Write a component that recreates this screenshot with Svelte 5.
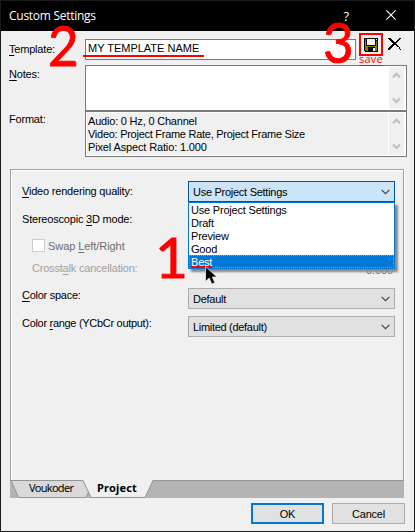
<script>
  const options = ['Use Project Settings', 'Draft', 'Preview', 'Good', 'Best'];
  let selected = $state('Best');
</script>

{#snippet chevron(up)}
  <svg class="scroll-arrow" width="9" height="7" viewBox="0 0 9 7">
    <path d={up ? 'M1 5.2 4.5 1.7 8 5.2' : 'M1 1.5 4.5 5 8 1.5'} fill="none" stroke="#bfbfbf" stroke-width="2.1" />
  </svg>
{/snippet}

{#snippet arrow()}
  <svg class="combo-arrow" width="9" height="6" viewBox="0 0 9 6">
    <path d="M.6 .8 4.5 4.7 8.4 .8" fill="none" stroke="#444" stroke-width="1.2" />
  </svg>
{/snippet}

{#snippet scrollbar()}
  <div class="scrollbar">{@render chevron(true)}{@render chevron(false)}</div>
{/snippet}

<div class="window">
  <header>
    <span class="title">Custom Settings</span>
    <span class="help">?</span>
    <svg class="close" width="10" height="10" viewBox="0 0 10 10">
      <path d="M.4 .4 9.6 9.6M9.6 .4 .4 9.6" stroke="#fff" stroke-width="1.1" />
    </svg>
  </header>

  <section class="form">
    <div class="row template">
      <span class="label"><u>T</u>emplate:</span>
      <div class="input"><span class="name">MY TEMPLATE NAME</span></div>
      <div class="save">
        <svg width="14" height="14" viewBox="0 0 14 14" shape-rendering="crispEdges">
          <path d="M0 0H14V14H1L0 13Z" fill="#000" />
          <path d="M1 1H2V8H12V3H13V13H11V9H4V13H2L1 12Z" fill="#808000" />
          <path d="M3 1H11V7H3Z" fill="#f0f0f0" />
          <path d="M12 1H13V2H12Z" fill="#f0f0f0" />
          <path d="M9 10H11V13H9Z" fill="#f0f0f0" />
        </svg>
      </div>
      <svg class="delete" width="14" height="13" viewBox="0 0 14 13" shape-rendering="crispEdges">
        <path d="M0 0H3V1H4V2H5V3H6V4H8V3H9V2H10V1H11V0H13V1H12V2H11V3H10V4H9V5H8V6H9V7H10V8H11V9H12V10H11V9H9V8H8V7H6V8H5V9H4V10H3V11H2V12H0V10H1V9H2V8H3V7H4V6H5V5H4V4H3V3H2V2H1V1H0ZM11 10H12V11H11ZM12 11H13V12H12Z" fill="#000" />
      </svg>
    </div>
    <div class="row notes">
      <span class="label"><u>N</u>otes:</span>
      <div class="box white">{@render scrollbar()}</div>
    </div>
    <div class="row format">
      <span class="label">Format:</span>
      <div class="box">
        <div class="lines">
          <div>Audio: 0 Hz, 0 Channel</div>
          <div class="tight">Video: Project Frame Rate, Project Frame Size</div>
          <div class="loose">Pixel Aspect Ratio: 1.000</div>
        </div>
        {@render scrollbar()}
      </div>
    </div>
  </section>

  <section class="panel">
    <div class="setting">
      <span class="label"><u>V</u>ideo rendering quality:</span>
      <div class="combo open">
        <span class="tight">Use Project Settings</span>{@render arrow()}
        <ul>
          {#each options as option}
            <li class:selected={option === selected}><button onclick={() => (selected = option)}>{option}</button></li>
          {/each}
        </ul>
      </div>
    </div>
    <div class="setting stereo"><span class="label">Stereoscopic <u>3</u>D mode:</span></div>
    <div class="setting sub"><i class="check"></i><span class="label swap">Swap <u>L</u>eft/Right</span></div>
    <div class="setting sub cross"><span class="label">Crosst<u>a</u>lk cancellation:</span><span class="amount">0.000</span></div>
    <div class="setting raised"><span class="label tight"><u>C</u>olor space:</span><div class="combo"><span class="tight">Default</span>{@render arrow()}</div></div>
    <div class="setting raised"><span class="label range">Color <u>r</u>ange (YCbCr output):</span><div class="combo"><span class="limited">Limited (default)</span>{@render arrow()}</div></div>
  </section>

  <nav>
    <svg class="tab-shapes" width="145" height="18" viewBox="0 0 145 18">
      <path d="M1 .5 8.5 17.5H76L80 10 73 .5Z" fill="#d9d9d9" />
      <path d="M1 .5 8.5 17.5H76L79.5 10M0 .5H73.5" fill="none" stroke="#949494" />
      <path d="M73 0 81 17.5H135L143 0Z" fill="#f0f0f0" />
      <path d="M73 .5 81 17.5H135L143 .5H145" fill="none" stroke="#949494" />
    </svg>
    <span class="tab first">Voukoder</span>
    <span class="tab active">Project</span>
  </nav>

  <footer>
    <button class="ok"><span>OK</span></button>
    <button><span>Cancel</span></button>
  </footer>

  <i class="mark under-name"></i>
  <i class="mark under-best"></i>
  <span class="digit one">1</span>
  <span class="digit two">2</span>
  <span class="digit three">3</span>
  <span class="save-note">save</span>
  <svg class="cursor" width="13" height="19" viewBox="0 0 14 21">
    <path d="M.5 .5V17L4.5 13.3 7.3 20 10.7 18.6 8 12.2H13Z" fill="#000" stroke="#f4f4f4" stroke-width=".8" />
  </svg>
</div>

<style>
  .window {
    position: relative;
    box-sizing: border-box;
    width: 415px;
    height: 532px;
    border: 1px solid #1a1a1a;
    background: #f0f0f0;
    color: #000;
    font: 11px/13px "Liberation Sans", Arial, sans-serif;
    letter-spacing: -0.2px;
    white-space: nowrap;
    overflow: hidden;
  }
  svg { display: block; flex: none; }
  u { text-decoration: underline; text-underline-offset: 2px; text-decoration-thickness: 1px; text-decoration-skip-ink: none; }
  .tight { letter-spacing: -0.27px; }
  .loose { letter-spacing: -0.14px; }
  header { box-sizing: border-box; display: flex; align-items: center; height: 30px; padding: 0 18px 2px 8px; background: #000; color: #fff; font: 12px/16px "Open Sans", sans-serif; }
  .title { flex: 1; padding-top: 1px; letter-spacing: -0.27px; }
  .help { padding-top: 1px; font-size: 13px; margin-right: 37px; }
  .form { display: flex; flex-direction: column; height: 138px; }
  .row { display: grid; grid-template-columns: 76px 1fr; padding: 0 7px 0 8px; }
  .row.template { grid-template-columns: 76px 271px 24px 14px; height: 34px; box-sizing: border-box; padding-top: 2px; }
  .row.template .label { padding-top: 10px; }
  .input { box-sizing: border-box; height: 21px; margin-top: 6px; padding: 3px 2px; border: 1px solid #7a7a7a; background: #fff; }
  .name { position: relative; top: -1px; letter-spacing: 0; }
  .save { box-sizing: border-box; width: 24px; height: 23px; margin-left: 3px; padding: 3px; border: 2px solid #f00; }
  .delete { margin: 5px 0 0 8px; }
  .notes .label { padding-top: 3px; }
  .format .label { padding-top: 2px; }
  .box { box-sizing: border-box; display: flex; height: 46px; border: 1px solid #7a7a7a; padding: 1px; background: #f0f0f0; box-shadow: inset 0 0 0 1px #fff; }
  .white { background: #fff; }
  .lines { flex: 1; padding: 2px 1px; }
  .scrollbar { box-sizing: border-box; display: flex; flex-direction: column; align-items: center; justify-content: space-between; width: 17px; margin-left: auto; padding: 5px 1px 5px 0; border-left: 1px solid #fff; border-right: 1px solid #fff; background: #f0f0f0; }
  .panel { box-sizing: border-box; display: flex; flex-direction: column; width: 394px; height: 311px; margin-left: 9px; padding: 11px 8px 0 11px; border: 1px solid #a0a0a0; border-width: 1px 1px 0; box-shadow: inset 1px 1px 0 #fff, 1px 0 0 #fff; }
  .setting { position: relative; display: flex; align-items: center; justify-content: space-between; height: 21px; margin-bottom: 7px; }
  .setting.stereo { margin-bottom: 5px; }
  .setting.sub { justify-content: flex-start; margin-bottom: 6px; padding-left: 10px; color: #6d6d6d; }
  .setting.cross { height: 16px; color: #a0a0a0; justify-content: space-between; margin-bottom: 10px; }
  .cross .label { margin-top: -4px; }
  .raised .label { margin-top: -7px; }
  .range { letter-spacing: -0.3px; }
  .limited { letter-spacing: -0.3px; }
  .swap { padding-top: 1px; letter-spacing: -0.07px; }
  .check { box-sizing: border-box; width: 13px; height: 13px; margin-right: 3px; border: 1px solid #ccc; background: #fff; }
  .amount { color: #6d6d6d; margin: 0 2px 0 0; letter-spacing: -0.1px; }
  .combo { position: relative; box-sizing: border-box; display: flex; align-items: center; justify-content: space-between; width: 207px; height: 21px; padding: 0 4px; border: 1px solid #adadad; background: #e1e1e1; }
  .combo > span { padding-top: 1px; }
  .combo.open { border-color: #005499; background: #cce4f7; }
  ul { position: absolute; z-index: 1; top: 20px; left: -1px; box-sizing: border-box; width: 207px; height: 67px; margin: 0; padding: 0; border: 1px solid #0078d7; background: #fff; list-style: none; box-shadow: 3px 3px 2px #888; }
  li { height: 13px; }
  li button { box-sizing: border-box; display: block; width: 100%; height: 13px; padding: 1px 2px 0; border: 0; background: none; color: inherit; font: inherit; line-height: 13px; letter-spacing: inherit; text-align: left; }
  li.selected { background: #0078d7; color: #fff; outline: 1px dotted #e88930; outline-offset: -1px; }
  nav { position: relative; display: flex; width: 394px; height: 18px; margin-left: 9px; background: linear-gradient(#949494 1px, #b4b4b4 1px); font: 11px/16px "Noto Sans", sans-serif; }
  .tab-shapes { position: absolute; left: 0; top: 0; }
  .tab { position: relative; }
  .first { width: 68px; padding-left: 19px; letter-spacing: -0.7px; }
  .active { font-weight: 700; letter-spacing: 0.2px; }
  footer { display: flex; justify-content: flex-end; gap: 8px; padding: 5px 9px 0 0; }
  footer button { box-sizing: border-box; width: 73px; height: 21px; padding: 1px 0 0; border: 1px solid #adadad; background: #e1e1e1; color: #000; font: inherit; letter-spacing: inherit; }
  footer .ok { border: 2px solid #0078d7; }
  .mark { position: absolute; z-index: 2; height: 2px; background: #f00; }
  .under-name { left: 82px; top: 54px; width: 121px; }
  .under-best { left: 190px; top: 265px; width: 21px; }
  .digit { position: absolute; z-index: 2; color: #f00; font: 57px/57px Lato, sans-serif; letter-spacing: 0; -webkit-text-stroke: .9px #f00; transform-origin: left; }
  .one { left: 154px; top: 227px; }
  .two { left: 47px; top: 15px; transform: scaleX(.93); }
  .three { left: 322px; top: 12px; transform: scaleX(.93); }
  .save-note { position: absolute; z-index: 2; left: 358px; top: 51px; color: #f00; font: 11px/14px "Open Sans", sans-serif; letter-spacing: 0.2px; border-bottom: 1px solid #f00; height: 13px; }
  .cursor { position: absolute; z-index: 3; left: 204px; top: 265px; }
</style>
